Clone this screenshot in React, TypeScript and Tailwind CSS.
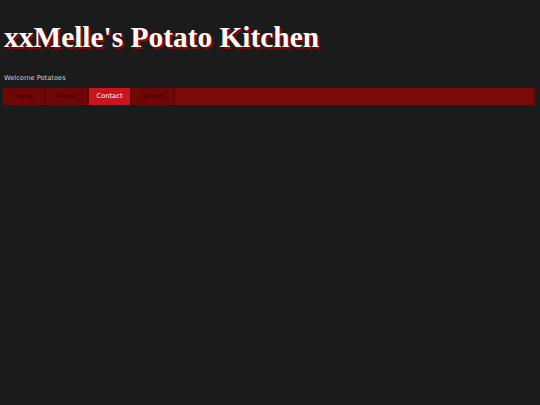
export default function App() {
  const links = ["Home", "About", "Contact", "Careers"];
  return (
    <div className="min-h-[405px] bg-[#1b1b1b] px-[3px] pt-[20px]" style={{ fontFamily: '"DejaVu Sans", Verdana, sans-serif' }}>
      <h1
        className="text-[29.4px] font-bold leading-[34px] text-white pl-[1px] [text-shadow:2px_2px_1px_#a00000]"
        style={{ fontFamily: '"Liberation Serif", "Times New Roman", serif' }}
      >
        xxMelle's Potato Kitchen
      </h1>
      <p className="mt-[19px] pl-[1px] text-[6.7px] leading-[10px] text-[#d0d0d0]">Welcome Potatoes</p>
      <nav className="mt-[5px] mr-[1px] flex h-[17px] bg-[#7a0909] border-r-2 border-[#5e0606]">
        {links.map((l) => (
          <a
            key={l}
            className={
              "flex w-[43px] items-center justify-center border-r-2 border-[#5e0606] text-[6.7px] " +
              (l === "Contact" ? "bg-[#c8141b] text-white" : "bg-[#700707] text-[#3a0000]")
            }
          >
            {l}
          </a>
        ))}
      </nav>
    </div>
  );
}
